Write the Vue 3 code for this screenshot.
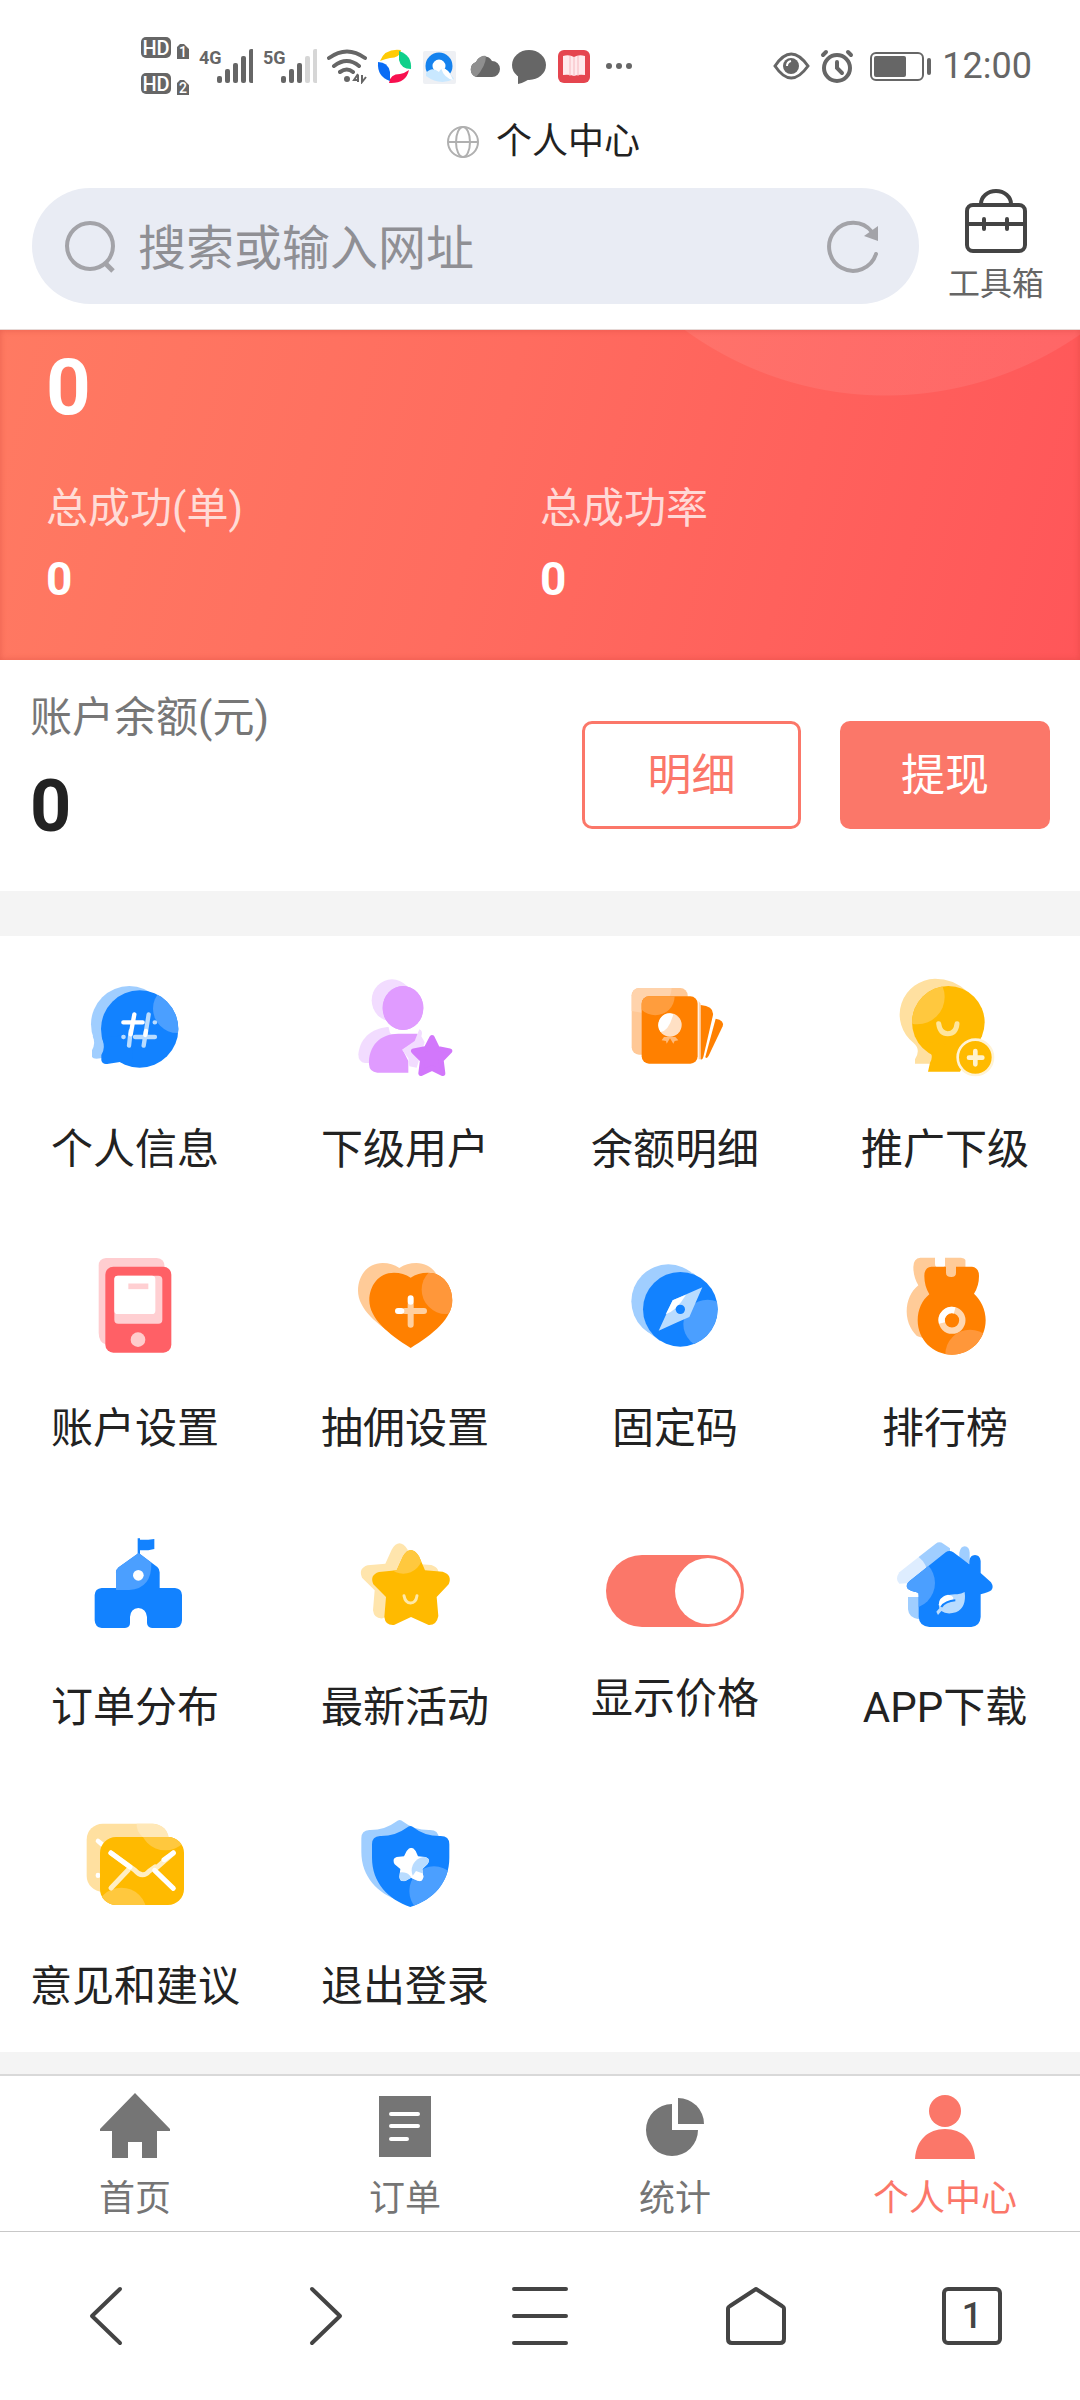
<template>
  <div class="page">
    <header class="browser-header">
      <div class="status-bar">
        <div class="status-left">
          <svg width="48" height="60" viewBox="0 0 48 60" aria-hidden="true">
            <g fill="#666">
              <rect x="0" y="1" width="30" height="21" rx="5" />
              <rect x="0" y="37" width="30" height="21" rx="5" />
              <path d="M36 11l3-3h4l5 5v10H36zM36 47l3-3h4l5 5v10H36z" />
            </g>
            <g fill="#fff" class="tiny-text">
              <text x="15" y="19" text-anchor="middle">HD</text>
              <text x="15" y="55" text-anchor="middle">HD</text>
              <text x="38" y="21" font-size="14">1</text>
              <text x="38" y="57" font-size="14">2</text>
            </g>
          </svg>
          <svg
            v-for="signal in signals"
            :key="signal.name"
            width="54"
            height="36"
            viewBox="0 0 54 36"
            aria-hidden="true"
          >
            <text x="0" y="16" class="signal-text">{{ signal.name }}</text>
            <rect
              v-for="n in 5"
              :key="n"
              :x="n * 8 + 10"
              :y="35 - barHeights[n - 1]"
              width="5"
              :height="barHeights[n - 1]"
              rx="2"
              :fill="n <= signal.level ? '#666' : '#d6d6d6'"
            />
          </svg>
          <svg width="40" height="36" viewBox="0 0 40 36" aria-hidden="true">
            <g fill="none" stroke="#666" stroke-width="4" stroke-linecap="round">
              <path d="M2 10Q20-3 38 10M7 18Q20 8 32 18M13 24q7-5 13 0" />
            </g>
            <circle cx="20" cy="31" r="3" fill="#666" />
            <path d="M31 26l-4 6h5m-1-5v7M35 27v7l4-5" fill="none" stroke="#666" stroke-width="2" />
          </svg>
          <svg width="35" height="36" viewBox="0 0 35 36" aria-hidden="true">
            <path d="M3 13Q8 0 24 2q-1 8-11 8-5 1-10 3z" fill="#ffcb05" />
            <path d="M22 3q13 4 12 18-10 0-12-9 0-5 0-9z" fill="#10d08a" />
            <path d="M32 22q-3 14-20 13 1-9 11-9 5-1 9-4z" fill="#f8104f" />
            <path d="M1 14q10 0 12 10 0 6 0 9Q0 29 1 14z" fill="#0a6cf5" />
          </svg>
          <svg width="35" height="36" viewBox="0 0 35 36" aria-hidden="true">
            <rect x="1" y="3" width="33" height="33" rx="2" fill="#eef0f4" />
            <circle cx="17" cy="18" r="10" fill="#fff" stroke="#1582ee" stroke-width="7" />
            <path d="M4 25q6-7 13-1 3-7 10 0l5 7q-14 7-28-3z" fill="#c9e8ff" />
            <path d="M19 20q7-1 12 12-9-2-12-12z" fill="#fff" />
          </svg>
          <svg width="35" height="36" viewBox="0 0 35 36" aria-hidden="true">
            <path d="M9 29a8 8 0 0 1 0-15 9 9 0 0 1 16-1 8 8 0 0 1 0 16z" fill="#666" />
            <path d="M9 29a8 8 0 0 1 0-15 9 9 0 0 1 10-6q0 10-10 21z" fill="#8f8f8f" />
          </svg>
          <svg width="35" height="36" viewBox="0 0 35 36" aria-hidden="true">
            <ellipse cx="17" cy="17" rx="17" ry="15" fill="#666" />
            <path d="M6 26v10q8-2 12-6z" fill="#666" />
          </svg>
          <svg width="35" height="36" viewBox="0 0 35 36" aria-hidden="true">
            <rect x="1" y="2" width="32" height="33" rx="6" fill="#e5454f" />
            <path d="M6 8q6-2 11 1 5-3 11-1v19q-6-1-11 1-5-2-11-1z" fill="#ffe9ec" />
            <path d="M13 8v20M17 9v19M21 8v20" stroke="#f5b9c0" />
          </svg>
          <svg width="30" height="36" viewBox="0 0 30 36" aria-hidden="true">
            <g fill="#666">
              <circle cx="7" cy="18" r="3" /><circle cx="17" cy="18" r="3" /><circle cx="27" cy="18" r="3" />
            </g>
          </svg>
        </div>
        <div class="status-right">
          <svg width="37" height="36" viewBox="0 0 37 36" aria-hidden="true">
            <path d="M2 18Q18-6 35 18 18 42 2 18z" fill="none" stroke="#666" stroke-width="3" />
            <circle cx="18" cy="18" r="8" fill="#666" />
            <path d="M14 18q0-4 4-5" fill="none" stroke="#fff" stroke-width="2" />
          </svg>
          <svg width="40" height="36" viewBox="0 0 40 36" aria-hidden="true">
            <g fill="none" stroke="#666" stroke-linecap="round">
              <circle cx="17" cy="20" r="13" stroke-width="4" />
              <path d="M17 14v6l5 5" stroke-width="4" />
              <path d="M3 7l3-3M31 7l-3-3" stroke-width="4" />
            </g>
          </svg>
          <svg width="62" height="36" viewBox="0 0 62 36" aria-hidden="true">
            <rect x="1" y="5" width="52" height="27" rx="5" fill="none" stroke="#666" stroke-width="2" />
            <rect x="4" y="8" width="32" height="21" rx="2" fill="#666" />
            <rect x="57" y="10" width="4" height="17" rx="2" fill="#666" />
          </svg>
          <span class="clock">12:00</span>
        </div>
      </div>

      <div class="site-title">
        <svg width="34" height="34" viewBox="0 0 34 34" aria-hidden="true">
          <g fill="none" stroke="#b0b0b0" stroke-width="2">
            <circle cx="17" cy="17" r="15" />
            <ellipse cx="17" cy="17" rx="7" ry="15" />
            <path d="M2 17h30" />
          </g>
        </svg>
        <span>个人中心</span>
      </div>

      <div class="search-row">
        <form class="search-box" @submit.prevent>
          <svg width="52" height="54" viewBox="0 0 52 54" aria-hidden="true">
            <g fill="none" stroke="#a3a3a8" stroke-width="4">
              <circle cx="26" cy="27" r="23" />
              <path d="M41 44l8 8" stroke-width="5" />
            </g>
          </svg>
          <input v-model="keyword" type="text" placeholder="搜索或输入网址" aria-label="搜索或输入网址" />
          <button type="button" class="refresh-btn" aria-label="刷新">
            <svg width="54" height="54" viewBox="0 0 54 54" aria-hidden="true">
              <path d="M50 35A24 24 0 1 1 46 13" fill="none" stroke="#a3a3a8" stroke-width="4" stroke-linecap="round" />
              <path d="M52 7v15l-14-5z" fill="#a3a3a8" />
            </svg>
          </button>
        </form>
        <button type="button" class="toolbox">
          <svg width="62" height="64" viewBox="0 0 62 64" aria-hidden="true">
            <g fill="none" stroke="#444" stroke-width="4" stroke-linecap="round">
              <rect x="2" y="16" width="58" height="46" rx="6" />
              <path d="M16 15a15 13 0 0 1 30 0M3 35h56M19 30v10M42 30v10" />
            </g>
          </svg>
          <span>工具箱</span>
        </button>
      </div>
    </header>

    <main>
      <section class="banner">
        <div class="banner-total">0</div>
        <div class="banner-stats">
          <div v-for="stat in stats" :key="stat.label" class="stat">
            <div class="stat-label">{{ stat.label }}</div>
            <div class="stat-value">{{ stat.value }}</div>
          </div>
        </div>
      </section>

      <section class="balance">
        <div class="balance-info">
          <div class="balance-label">账户余额(元)</div>
          <div class="balance-value">0</div>
        </div>
        <div class="balance-actions">
          <button type="button" class="btn btn-plain">明细</button>
          <button type="button" class="btn btn-primary">提现</button>
        </div>
      </section>

      <nav class="menu-grid">
        <template v-for="item in menus" :key="item.label">
          <label v-if="item.type === 'switch'" class="menu-item menu-switch">
            <input v-model="showPrice" type="checkbox" class="switch" />
            <span>{{ item.label }}</span>
          </label>
          <a v-else href="#" class="menu-item" @click.prevent>
            <svg width="100" height="100" :viewBox="item.box" aria-hidden="true" v-html="item.icon" />
            <span>{{ item.label }}</span>
          </a>
        </template>
      </nav>
    </main>

    <nav class="tab-bar">
      <a
        v-for="(tab, index) in tabs"
        :key="tab.label"
        href="#"
        class="tab"
        :class="{ active: index === activeTab }"
        @click.prevent="activeTab = index"
      >
        <svg width="72" height="72" viewBox="0 0 72 72" aria-hidden="true" v-html="tab.icon" />
        <span>{{ tab.label }}</span>
      </a>
    </nav>

    <footer class="browser-nav">
      <button type="button" aria-label="后退">
        <svg width="72" height="72" viewBox="0 0 72 72"><path d="M48 9L20 36l28 27" /></svg>
      </button>
      <button type="button" aria-label="前进">
        <svg width="72" height="72" viewBox="0 0 72 72"><path d="M24 9l28 27-28 27" /></svg>
      </button>
      <button type="button" aria-label="菜单">
        <svg width="72" height="72" viewBox="0 0 72 72"><path d="M10 9h52M10 36h52M10 63h52" /></svg>
      </button>
      <button type="button" aria-label="主页">
        <svg width="72" height="72" viewBox="0 0 72 72">
          <path d="M36 9L10 26q-2 1-2 3v30q0 4 4 4h48q4 0 4-4V29q0-2-2-3z" />
        </svg>
      </button>
      <button type="button" aria-label="窗口">
        <svg width="72" height="72" viewBox="0 0 72 72">
          <rect x="8" y="9" width="56" height="54" rx="4" />
          <text x="36" y="48" text-anchor="middle">1</text>
        </svg>
      </button>
    </footer>
  </div>
</template>

<script setup>
import { ref } from 'vue';

const keyword = ref('');
const showPrice = ref(true);
const activeTab = ref(3);

// 信号强度
const barHeights = [7, 14, 20, 27, 34];
const signals = [
  { name: '4G', level: 5 },
  { name: '5G', level: 3 }
];

const stats = [
  { label: '总成功(单)', value: 0 },
  { label: '总成功率', value: 0 }
];

const heart = 'M1112 140Q1090 125 1062 125C1015 125 988 165 988 208C988 262 1045 310 1112 351C1180 310 1237 262 1237 208C1237 165 1210 125 1163 125Q1134 125 1112 140Z';
const medal = 'M1114 107H1158V125Q1158 138 1174 138Q1188 138 1188 125V107H1236Q1257 110 1257 135Q1257 165 1242 188C1262 206 1277 236 1277 268C1277 326 1232 371 1176 371C1118 371 1073 326 1073 268C1073 236 1086 208 1108 190Q1093 165 1093 135Q1093 109 1114 107Z';
const smileStar = 'M1089 136Q1112 98 1137 136L1155 178L1208 182Q1238 192 1226 220L1190 258L1195 315Q1190 343 1166 342L1113 318L1062 342Q1036 344 1033 318L1038 258L1000 220Q988 192 1017 183L1070 178Z';
const shield = 'M1171 105Q1176 105 1182 110Q1215 136 1262 135Q1288 135 1288 160V200C1288 275 1240 325 1171 348C1105 325 1056 275 1056 200V160Q1056 136 1080 135Q1125 136 1160 110Q1166 105 1171 105Z';
const house = 'M1157 124Q1168 116 1180 124L1228 160V150Q1230 132 1245 132Q1260 132 1262 150V186L1293 214Q1302 228 1294 238Q1286 244 1262 250V318Q1260 346 1234 348H1108Q1078 346 1076 318V245Q1048 240 1042 232Q1036 222 1048 211Z';

// 功能菜单
const menus = [
  {
    label: '个人信息',
    box: '135 81 300 300',
    icon: `
      <circle cx="268" cy="220" r="115" fill="#a0ceff"/>
      <path d="M158 255Q168 275 156 298V318Q160 326 182 322L240 310V240Z" fill="#a0ceff"/>
      <clipPath id="c-info"><circle cx="299" cy="234" r="116"/></clipPath>
      <circle cx="299" cy="234" r="116" fill="#1282ff"/>
      <path d="M186 260Q198 290 184 312V328Q188 343 206 338L240 333Q258 338 275 346L280 250Z" fill="#1282ff"/>
      <circle cx="412" cy="173" r="73" fill="#4b9fff" clip-path="url(#c-info)"/>
      <g fill="none" stroke-width="13" stroke-linecap="round">
        <path d="M326 190L311 284M272 240L267 284M285 258H345M344 214H345M250 258H251" stroke="#b9dcff"/>
        <path d="M283 190L272 250M250 214H308M318 240L316 252" stroke="#fff"/>
      </g>`
  },
  {
    label: '下级用户',
    box: '945 81 300 300',
    icon: `
      <ellipse cx="1056" cy="148" rx="61" ry="63" fill="#f2dcff"/>
      <path d="M955 310C960 255 1005 228 1050 228L1060 336H975Q955 334 955 310Z" fill="#f2dcff"/>
      <ellipse cx="1089" cy="171" rx="61" ry="66" fill="#e09bff"/>
      <path d="M1045 225Q1089 252 1133 225L1130 246H1050Z" fill="#fff"/>
      <ellipse cx="1089" cy="171" rx="61" ry="66" fill="#e09bff"/>
      <path d="M987 340C985 285 1020 248 1075 248H1132L1140 262L1088 296L1105 330V365H1012Q988 363 987 340Z" fill="#e09bff"/>
      <path d="M1138 235Q1150 240 1144 256L1154 274L1130 350L1108 346L1105 322L1086 296L1124 270Z" fill="#f2dcff"/>
      <path d="M1176 260L1192 293L1229 300L1203 327L1208 367L1176 351L1143 367L1148 327L1121 300L1159 293Z" fill="#d277fb" stroke="#d277fb" stroke-width="16" stroke-linejoin="round"/>`
  },
  {
    label: '余额明细',
    box: '195 81 300 300',
    icon: `
      <rect x="215" y="111" width="168" height="200" rx="22" fill="#ffc896"/>
      <path d="M215 180V133Q217 112 240 111H335Q330 180 245 185Z" fill="#ffd3ac"/>
      <clipPath id="c-card"><rect x="245" y="136" width="168" height="202" rx="22"/></clipPath>
      <rect x="245" y="136" width="168" height="202" rx="22" fill="#ff8000"/>
      <circle cx="286" cy="135" r="58" fill="#ff9d3d" clip-path="url(#c-card)"/>
      <path d="M416 150L422 158V325H416Z" fill="#ffd3ac"/>
      <path d="M422 162Q462 166 459 192L430 318Q427 328 422 325Z" fill="#ff8000"/>
      <path d="M467 203Q494 208 488 226L446 314Q439 326 436 318Z" fill="#ff8000"/>
      <path d="M312 258L305 268L318 270L320 278L330 262L340 278L344 270L355 268L346 258Z" fill="#ffb978"/>
      <circle cx="330" cy="222" r="35" fill="#ffe0c4"/>
      <path d="M330 187A35 35 0 0 0 302 243Q326 240 340 190Z" fill="#fff"/>`
  },
  {
    label: '推广下级',
    box: '1005 81 300 300',
    icon: `
      <path d="M1125 83A110 108 0 0 0 1060 275Q1084 295 1065 325V338H1130L1220 120Q1180 83 1125 83Z" fill="#ffe0a0"/>
      <clipPath id="c-head"><circle cx="1165" cy="214" r="109"/></clipPath>
      <circle cx="1165" cy="214" r="109" fill="#ffba00"/>
      <path d="M1080 270L1112 305Q1120 318 1110 335L1104 362H1200L1240 290Z" fill="#ffba00"/>
      <circle cx="1072" cy="138" r="82" fill="#ffc83e" clip-path="url(#c-head)"/>
      <path d="M1136 218Q1140 248 1163 248Q1188 248 1191 218" fill="none" stroke="#ffe59b" stroke-width="15" stroke-linecap="round"/>
      <circle cx="1246" cy="319" r="53" fill="#ffba00" stroke="#fff3d5" stroke-width="8"/>
      <path d="M1246 300V340M1227 320H1267" stroke="#fff2cc" stroke-width="14" stroke-linecap="round"/>`
  },
  {
    label: '账户设置',
    box: '135 78 300 300',
    icon: `
      <path d="M198 81H350Q374 82 374 108L300 341H200Q176 336 176 305V104Q176 83 198 81Z" fill="#ffcdd0"/>
      <rect x="196" y="107" width="198" height="258" rx="24" fill="#ff6066"/>
      <rect x="223" y="134" width="144" height="144" rx="12" fill="#ffcfd2"/>
      <rect x="223" y="134" width="123" height="115" rx="10" fill="#fff"/>
      <path d="M265 166H325" stroke="#ffcfd2" stroke-width="17"/>
      <circle cx="294" cy="326" r="22" fill="#ffcccc"/>`
  },
  {
    label: '抽佣设置',
    box: '945 78 300 300',
    icon: `
      <path d="${heart}" fill="#ffcb98" transform="translate(-34 -29)"/>
      <clipPath id="c-heart"><path d="${heart}"/></clipPath>
      <path d="${heart}" fill="#ff8000"/>
      <circle cx="1218" cy="176" r="73" fill="#ff973a" clip-path="url(#c-heart)"/>
      <path d="M1112 220V281M1095 240H1152" stroke="#ffcf9f" stroke-width="18" stroke-linecap="round"/>
      <path d="M1112 202V212M1074 240H1084" stroke="#fff" stroke-width="18" stroke-linecap="round"/>`
  },
  {
    label: '固定码',
    box: '195 78 300 300',
    icon: `
      <circle cx="325" cy="211" r="111" fill="#a0ceff"/>
      <path d="M398 125L450 170L300 330L250 292Z" fill="#a0ceff"/>
      <clipPath id="c-compass"><circle cx="361" cy="235" r="112"/></clipPath>
      <circle cx="361" cy="235" r="112" fill="#1282ff"/>
      <circle cx="443" cy="279" r="73" fill="#4b9fff" clip-path="url(#c-compass)"/>
      <path d="M427 169L388 258L352 274L296 299L338 208Z" fill="#b9dcff"/>
      <path d="M338 208L378 191Q350 238 317 250Z" fill="#fff"/>
      <circle cx="361" cy="235" r="14" fill="#1282ff"/>`
  },
  {
    label: '排行榜',
    box: '1005 78 300 300',
    icon: `
      <clipPath id="c-medal-back"><path d="M1030 70H1250V250L1130 350L1030 320Z"/></clipPath>
      <path d="${medal}" fill="#ffcb98" transform="translate(-33 -27)" clip-path="url(#c-medal-back)"/>
      <clipPath id="c-medal"><path d="${medal}"/></clipPath>
      <path d="M1158 100H1188V125Q1188 138 1174 138Q1158 138 1158 125Z" fill="#ffcb98"/>
      <path d="M1130 80H1155V106H1130Z" fill="#fff"/>
      <path d="${medal}" fill="#ff8000"/>
      <circle cx="1230" cy="370" r="74" fill="#ff973a" clip-path="url(#c-medal)"/>
      <circle cx="1176" cy="268" r="31" fill="none" stroke="#ffd7b0" stroke-width="19"/>
      <path d="M1146 276A31 31 0 0 1 1184 238" fill="none" stroke="#fff" stroke-width="19"/>`
  },
  {
    label: '订单分布',
    box: '135 75 300 300',
    icon: `
      <path d="M293 82H300V86H325L343 84V114L325 118H300V130H293Z" fill="#1282ff"/>
      <path d="M296 126L352 168Q359 174 359 184V231H405Q425 233 426 252V328Q425 350 405 351H336Q322 350 321 336V318Q318 292 295 291Q272 292 270 318V336Q270 350 255 351H185Q165 349 164 328V252Q165 233 185 231H228V184Q228 176 236 169Z" fill="#1282ff"/>
      <path d="M296 126L334 155Q336 232 268 237H228V184Q228 176 236 169Z" fill="#4b9fff"/>
      <circle cx="295" cy="193" r="16" fill="#fff"/>`
  },
  {
    label: '最新活动',
    box: '945 75 300 300',
    icon: `
      <path d="${smileStar}" fill="#ffe5ad" transform="translate(-34 -20)"/>
      <clipPath id="c-star"><path d="${smileStar}"/></clipPath>
      <path d="${smileStar}" fill="#ffba00"/>
      <circle cx="1090" cy="130" r="58" fill="#ffc83e" clip-path="url(#c-star)"/>
      <path d="M1092 254Q1096 276 1112 276Q1128 276 1131 254" fill="none" stroke="#ffe9a8" stroke-width="9" stroke-linecap="round"/>`
  },
  { label: '显示价格', type: 'switch' },
  {
    label: 'APP下载',
    box: '1005 75 300 300',
    icon: `
      <path d="M1127 98Q1138 90 1150 98L1170 112V300H1100L1076 325Q1046 320 1044 295V258H1080L1060 225L1090 180L1076 138Z" fill="#a0ceff"/>
      <path d="M1198 140V125Q1202 106 1214 106Q1228 107 1229 125V160Z" fill="#a0ceff"/>
      <path d="M1076 138Q1104 160 1102 195L1040 217L1018 218Q1004 205 1018 184Z" fill="#deedff"/>
      <clipPath id="c-house"><path d="${house}"/></clipPath>
      <path d="${house}" fill="#1282ff"/>
      <circle cx="1048" cy="216" r="77" fill="#4b9fff" clip-path="url(#c-house)"/>
      <path d="M1214 243Q1220 290 1188 304Q1160 312 1144 300L1134 312L1129 302L1138 292Q1132 268 1154 254Q1178 248 1192 250Q1204 248 1214 243Z" fill="#b9dcff"/>
      <path d="M1136 282Q1136 258 1164 251Q1190 256 1174 270L1144 286Z" fill="#fff"/>
      <path d="M1144 288Q1156 270 1186 268" fill="none" stroke="#1282ff" stroke-width="6"/>`
  },
  {
    label: '意见和建议',
    box: '195 72 300 300',
    icon: `
      <rect x="200" y="98" width="246" height="204" rx="48" fill="#ffe0a0"/>
      <path d="M350 98H398Q440 102 446 140H370Q348 120 350 98Z" fill="#ffe8b8"/>
      <path d="M234 150L246 160M234 252V254" stroke="#fff" stroke-width="14" stroke-linecap="round"/>
      <clipPath id="c-mail"><rect x="240" y="138" width="252" height="204" rx="48"/></clipPath>
      <rect x="240" y="138" width="252" height="204" rx="48" fill="#ffba00"/>
      <g fill="#ffc83e" clip-path="url(#c-mail)">
        <circle cx="436" cy="102" r="76"/>
        <circle cx="304" cy="366" r="76"/>
      </g>
      <path d="M325 236L273 291M410 230L460 186" stroke="#ffeec4" stroke-width="15" stroke-linecap="round"/>
      <path d="M273 186L345 238Q368 264 388 240L405 228" fill="none" stroke="#ffeec4" stroke-width="15" stroke-linecap="round"/>
      <path d="M273 186L330 228M460 186L432 206M404 238L460 292" stroke="#fff" stroke-width="15" stroke-linecap="round"/>`
  },
  {
    label: '退出登录',
    box: '1005 72 300 300',
    icon: `
      <path d="${shield}" fill="#a0ceff" transform="translate(-32 -18)"/>
      <clipPath id="c-shield"><path d="${shield}"/></clipPath>
      <path d="${shield}" fill="#1282ff"/>
      <circle cx="1242" cy="300" r="74" fill="#4b9fff" clip-path="url(#c-shield)"/>
      <clipPath id="c-shield-star"><path d="M1160 180Q1174 160 1187 180L1194 196L1216 198Q1234 204 1222 220L1207 234L1210 258Q1206 276 1190 268L1173 260L1156 270Q1140 274 1138 258L1141 234L1124 220Q1114 204 1130 198L1152 196Z"/></clipPath>
      <g clip-path="url(#c-shield-star)">
        <path d="M1100 150H1250V290H1100Z" fill="#fff"/>
        <circle cx="1215" cy="238" r="40" fill="#b9dcff"/>
        <circle cx="1146" cy="278" r="34" fill="#b9dcff"/>
        <path d="M1173 262L1188 240L1215 250V290H1160Z" fill="#fff"/>
      </g>`
  }
];

// 底部导航
const tabs = [
  {
    label: '首页',
    icon: '<path d="M36 3L71 39V41H58V68H43V52H29V68H13V41H1V39Z" fill="currentColor"/>'
  },
  {
    label: '订单',
    icon: '<path d="M10 6H62V67H10Z" fill="currentColor"/><path d="M22 24H49M22 36H49M22 49H38" stroke="#fff" stroke-width="4" stroke-linecap="round"/>'
  },
  {
    label: '统计',
    icon: '<path d="M33 14V40H59A26 26 0 1 1 33 14Z" fill="currentColor"/><path d="M39 8A26 26 0 0 1 65 34H39Z" fill="currentColor"/>'
  },
  {
    label: '个人中心',
    icon: '<circle cx="36" cy="21" r="16" fill="currentColor"/><path d="M6 69C7 50 19 39 36 39S65 50 66 69Z" fill="currentColor"/>'
  }
];
</script>

<style>
body {
  margin: 0;
  background: #fff;
}
</style>

<style scoped>
.page {
  font-family: Roboto, "Noto Sans CJK SC", sans-serif;
  color: #222;
  background: #fff;
}

svg {
  display: block;
  flex-shrink: 0;
}

button,
input {
  margin: 0;
  padding: 0;
  border: none;
  background: none;
  font-family: inherit;
}

button {
  cursor: pointer;
}

a {
  color: inherit;
  text-decoration: none;
}

.browser-header {
  padding: 36px 0 25px;
  border-bottom: 1px solid #e6d8d6;
}

.status-bar {
  display: flex;
  align-items: center;
  justify-content: space-between;
  height: 60px;
  padding: 0 48px 0 141px;
}

.status-left,
.status-right {
  display: flex;
  align-items: center;
  gap: 10px;
}

.tiny-text {
  font-size: 20px;
  font-weight: 500;
}

.signal-text {
  font-family: "Liberation Sans Narrow", Roboto, sans-serif;
  font-size: 18px;
  font-weight: 700;
  fill: #666;
}

.clock {
  font-size: 36px;
  line-height: 40px;
  color: #666;
}

.site-title {
  display: flex;
  align-items: center;
  justify-content: center;
  gap: 16px;
  margin: 20px 0;
  padding-left: 6px;
  font-size: 36px;
  line-height: 52px;
}

.search-row {
  display: flex;
  align-items: center;
  gap: 29px;
  padding: 0 36px 0 32px;
}

.search-box {
  flex: 1;
  display: flex;
  align-items: center;
  gap: 22px;
  min-width: 0;
  height: 116px;
  padding: 0 39px 0 32px;
  box-sizing: border-box;
  border-radius: 58px;
  background: #e9ecf4;
}

.search-box input {
  flex: 1;
  min-width: 0;
  padding-top: 5px;
  font-size: 48px;
  line-height: 64px;
  color: #222;
  outline: none;
}

.search-box input::placeholder {
  color: #8f8f94;
  opacity: 1;
}

.toolbox {
  display: flex;
  flex-direction: column;
  align-items: center;
  gap: 11px;
  font-size: 32px;
  line-height: 40px;
  color: #666;
}

.banner {
  padding: 18px 46px 53px;
  color: #fff;
  background:
    radial-gradient(circle at 82% -275px, rgba(255, 255, 255, 0.08) 340px, transparent 341px),
    linear-gradient(105deg, #ff7a62 0%, #ff6c5f 45%, #ff5659 100%);
  box-shadow: inset 0 0 6px rgba(200, 60, 50, 0.4);
}

.banner-total {
  font-size: 78px;
  font-weight: 700;
  line-height: 80px;
}

.banner-stats {
  display: grid;
  grid-template-columns: 1fr 1fr;
  margin-top: 51px;
}

.stat-label {
  font-size: 42px;
  line-height: 60px;
  color: rgba(255, 255, 255, 0.75);
}

.stat-value {
  margin-top: 12px;
  font-size: 46px;
  font-weight: 700;
  line-height: 56px;
}

.balance {
  display: flex;
  align-items: center;
  justify-content: space-between;
  padding: 0 30px;
  border-bottom: 45px solid #f4f4f4;
}

.balance-info {
  padding: 28px 0 44px;
}

.balance-label {
  font-size: 42px;
  line-height: 60px;
  color: #777;
}

.balance-value {
  margin-top: 19px;
  font-size: 72px;
  font-weight: 700;
  line-height: 80px;
}

.balance-actions {
  display: flex;
  gap: 39px;
  padding-bottom: 2px;
}

.btn {
  box-sizing: border-box;
  height: 108px;
  padding-bottom: 6px;
  border-radius: 10px;
  font-size: 44px;
}

.btn-plain {
  width: 219px;
  border: 3px solid #fb7769;
  color: #fb7769;
}

.btn-primary {
  width: 210px;
  background: #fb7769;
  color: #fff;
}

.menu-grid {
  display: grid;
  grid-template-columns: repeat(4, 1fr);
  border-bottom: 22px solid #f4f4f4;
}

.menu-item {
  display: flex;
  flex-direction: column;
  align-items: center;
  gap: 42px;
  padding: 42px 0 35px;
  font-size: 42px;
  line-height: 60px;
  white-space: nowrap;
}

.menu-switch {
  padding: 61px 0 0;
  cursor: pointer;
}

.switch {
  appearance: none;
  box-sizing: border-box;
  display: flex;
  width: 138px;
  height: 72px;
  padding: 3px;
  border-radius: 36px;
  background: #ddd;
  cursor: pointer;
}

.switch::before {
  content: "";
  width: 66px;
  height: 66px;
  border-radius: 50%;
  background: #fff;
}

.switch:checked {
  justify-content: flex-end;
  background: #fb7769;
}

.tab-bar {
  display: grid;
  grid-template-columns: repeat(4, 1fr);
  border-top: 2px solid #d9d9d9;
}

.tab {
  display: flex;
  flex-direction: column;
  align-items: center;
  gap: 13px;
  padding: 14px 0 8px;
  font-size: 36px;
  line-height: 48px;
  color: #757575;
}

.tab.active {
  color: #fb7769;
}

.browser-nav {
  display: grid;
  grid-template-columns: repeat(5, 1fr);
  justify-items: center;
  padding: 48px 0;
  border-top: 1px solid #c8c8c8;
}

.browser-nav svg {
  fill: none;
  stroke: #444;
  stroke-width: 4;
  stroke-linecap: round;
  stroke-linejoin: round;
}

.browser-nav text {
  font-size: 36px;
  font-weight: 500;
  fill: #444;
  stroke: none;
}
</style>
